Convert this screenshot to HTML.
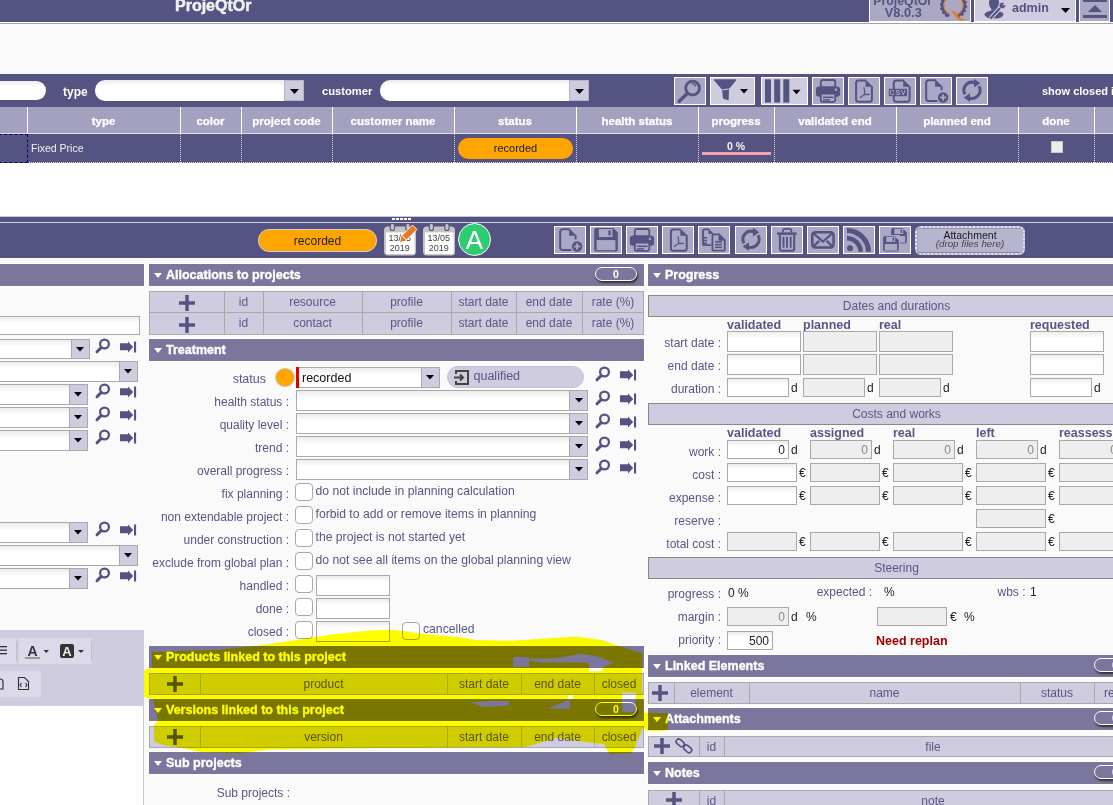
<!DOCTYPE html><html><head><meta charset="utf-8"><style>
html,body{margin:0;padding:0}
body{width:1113px;height:805px;overflow:hidden;position:relative;background:#fafafa;font-family:"Liberation Sans",sans-serif}
div{position:absolute;box-sizing:border-box}
.t{white-space:nowrap;line-height:1}
svg{position:absolute;overflow:visible}
</style></head><body>
<div style="left:0px;top:0px;width:1113px;height:22px;background:#545381"></div>
<div style="left:0px;top:22px;width:1113px;height:1px;background:#fff"></div>
<div style="left:0px;top:23px;width:1113px;height:1px;background:#a4a4a4"></div>
<div class="t" style="left:175px;top:-2px;font-size:16px;font-weight:700;color:#f0f0f0;;-webkit-text-stroke:0.5px #f0f0f0">ProjeQtOr</div>
<div style="left:869px;top:0px;width:102px;height:22px;background:#fff"></div>
<div style="left:870px;top:0px;width:100px;height:21px;background:#aba8c4"></div>
<div class="t" style="left:868px;width:69.5px;text-align:center;top:-5px;font-size:12.3px;font-weight:700;color:#545381;">ProjeQtOr</div>
<div class="t" style="left:868px;width:70.5px;text-align:center;top:7px;font-size:12.8px;font-weight:700;color:#545381;">V8.0.3</div>
<svg style="left:940px;top:0px" width="30" height="21" viewBox="0 0 30 21"><defs><clipPath id="lq"><rect x="0" y="0" width="30" height="21"/></clipPath></defs><g clip-path="url(#lq)"><circle cx="13.5" cy="5.5" r="11.2" fill="none" stroke="#545381" stroke-width="2.6"/><circle cx="25.75" cy="6.57" r="1.5" fill="#545381"/><circle cx="24.65" cy="10.70" r="1.5" fill="#545381"/><circle cx="22.20" cy="14.20" r="1.5" fill="#545381"/><circle cx="18.70" cy="16.65" r="1.5" fill="#545381"/><circle cx="14.57" cy="17.75" r="1.5" fill="#545381"/><circle cx="10.32" cy="17.38" r="1.5" fill="#545381"/><circle cx="6.45" cy="15.58" r="1.5" fill="#545381"/><circle cx="3.42" cy="12.55" r="1.5" fill="#545381"/><circle cx="1.62" cy="8.68" r="1.5" fill="#545381"/><circle cx="1.25" cy="4.43" r="1.5" fill="#545381"/><circle cx="2.35" cy="0.30" r="1.5" fill="#545381"/><circle cx="4.80" cy="-3.20" r="1.5" fill="#545381"/><circle cx="8.30" cy="-5.65" r="1.5" fill="#545381"/><circle cx="12.43" cy="-6.75" r="1.5" fill="#545381"/><circle cx="16.68" cy="-6.38" r="1.5" fill="#545381"/><circle cx="20.55" cy="-4.58" r="1.5" fill="#545381"/><circle cx="23.58" cy="-1.55" r="1.5" fill="#545381"/><circle cx="25.38" cy="2.32" r="1.5" fill="#545381"/><circle cx="13.5" cy="5.5" r="9.6" fill="none" stroke="#e87722" stroke-width="1.1"/><path d="M13.5 5.5 L7.5 20 L20 22Z" fill="#aba8c4"/><path d="M11 11 Q15 10.5 18 15 Q20.5 19.5 27 20 Q21 21.5 17.5 19 Q15 15 11 11Z" fill="#e87722"/></g></svg>
<div style="left:971px;top:0px;width:3px;height:22px;background:#545381"></div>
<div style="left:974px;top:0px;width:102px;height:22px;background:#fff"></div>
<div style="left:975px;top:0px;width:100px;height:21px;background:#cfcce0"></div>
<svg style="left:984px;top:0px" width="22" height="20" viewBox="0 0 22 20"><ellipse cx="10" cy="3" rx="5" ry="6.8" fill="#545381"/><path d="M7 8 Q10 11 13 8 L12.5 11 H7.5Z" fill="#545381"/><ellipse cx="10" cy="14.6" rx="9.5" ry="4" fill="#545381"/><path d="M6.5 18.5 L17.5 6.5" stroke="#cfcce0" stroke-width="4.2"/><path d="M6.5 18.5 L17.5 6.5" stroke="#545381" stroke-width="2"/><circle cx="18.3" cy="5.5" r="3.3" fill="#545381" stroke="#cfcce0" stroke-width="0.9"/><path d="M18.3 5.5 L21 2 L23 4.5Z" fill="#cfcce0"/></svg>
<div class="t" style="left:1012px;top:2px;font-size:12.5px;font-weight:700;color:#545381;">admin</div>
<svg style="left:1061px;top:8px" width="9" height="5" viewBox="0 0 9 5"><path d="M0 0H9L4.5 5Z" fill="#000"/></svg>
<div style="left:1076px;top:0px;width:3px;height:22px;background:#545381"></div>
<div style="left:1079px;top:0px;width:31px;height:22px;background:#fff"></div>
<div style="left:1080px;top:0px;width:29px;height:21px;background:#aba8c4"></div>
<div style="left:1083px;top:0px;width:24px;height:1.5px;background:#545381"></div>
<svg style="left:1088px;top:5px" width="14" height="8" viewBox="0 0 14 8"><path d="M0 7H14L7 0Z" fill="#545381"/></svg>
<div style="left:1083px;top:15px;width:24px;height:2.5px;background:#545381"></div>
<div style="left:1110px;top:0px;width:3px;height:22px;background:#545381"></div>
<div style="left:0px;top:74px;width:1113px;height:33px;background:#545381"></div>
<div style="left:-20px;top:81px;width:66px;height:19px;background:linear-gradient(#ececec,#fff 6px,#fff);border-radius:10px"></div>
<div class="t" style="left:63px;top:86px;font-size:12px;font-weight:700;color:#fff;">type</div>
<div style="left:95px;top:80px;width:209px;height:21px;background:linear-gradient(#ececec,#fff 6px,#fff);border-radius:10px 0 0 10px"></div>
<div style="left:284px;top:80px;width:20px;height:21px;background:#cfcce0;border:1px solid #b5b3c8"></div>
<svg style="left:289.5px;top:88.5px" width="9" height="5" viewBox="0 0 9 5"><path d="M0 0H9L4.5 5Z" fill="#000"/></svg>
<div class="t" style="left:322px;top:86px;font-size:11.2px;font-weight:700;color:#fff;">customer</div>
<div style="left:380px;top:80px;width:209px;height:21px;background:linear-gradient(#ececec,#fff 6px,#fff);border-radius:10px 0 0 10px"></div>
<div style="left:569px;top:80px;width:20px;height:21px;background:#cfcce0;border:1px solid #b5b3c8"></div>
<svg style="left:574.5px;top:88.5px" width="9" height="5" viewBox="0 0 9 5"><path d="M0 0H9L4.5 5Z" fill="#000"/></svg>
<div style="left:674px;top:77px;width:32px;height:28px;background:#aba8c6;border:1px solid #fff"></div>
<svg style="left:674px;top:77px" width="32" height="28" viewBox="0 0 32 28"><circle cx="18.6" cy="11.1" r="6.9" fill="none" stroke="#545381" stroke-width="2.8"/><path d="M17.5 6.3 A5 5 0 0 1 22 9.5" fill="none" stroke="#545381" stroke-width="1.3"/><line x1="13.5" y1="16.2" x2="5.2" y2="24.3" stroke="#545381" stroke-width="3.6" stroke-linecap="round"/></svg>
<div style="left:710px;top:77px;width:45px;height:28px;background:#cfcce0;border:1px solid #fff"></div>
<svg style="left:710px;top:77px" width="45" height="28" viewBox="0 0 45 28"><path d="M4 2.3 H26 Q26.6 2.5 26 3.5 L19 12 L18.6 23.5 L13 21.5 L12 12.5 L4 3.5 Q3.4 2.5 4 2.3Z" fill="#545381"/><path d="M12 13 L19 11.8" stroke="#cfcce0" stroke-width="1"/><path d="M30 12H38L34 16.5Z" fill="#000"/></svg>
<div style="left:761px;top:77px;width:47px;height:28px;background:#cfcce0;border:1px solid #fff"></div>
<svg style="left:761px;top:77px" width="47" height="28" viewBox="0 0 47 28"><rect x="4" y="2.3" width="6" height="23.3" fill="#545381"/><rect x="13.2" y="2.3" width="6" height="23.3" fill="#545381"/><rect x="22.3" y="2.3" width="6" height="23.3" fill="#545381"/><path d="M31.5 12.8H39.5L35.5 17.2Z" fill="#000"/></svg>
<div style="left:812px;top:77px;width:32px;height:28px;background:#aba8c6;border:1px solid #fff"></div>
<svg style="left:812px;top:77px" width="32" height="28" viewBox="0 0 32 28"><rect x="8.8" y="3" width="14.5" height="7.5" rx="2" fill="none" stroke="#545381" stroke-width="1.8"/><rect x="3.9" y="9.4" width="24.2" height="10.3" rx="3" fill="#545381"/><circle cx="23.9" cy="12.8" r="1.2" fill="#aba8c6"/><rect x="8.8" y="16.6" width="14.5" height="8.2" rx="1.5" fill="#aba8c6" stroke="#545381" stroke-width="1.8"/><rect x="11" y="19.6" width="10.5" height="1.4" fill="#545381"/><rect x="11" y="22.2" width="7" height="1.4" fill="#545381"/></svg>
<div style="left:848px;top:77px;width:32px;height:28px;background:#aba8c6;border:1px solid #fff"></div>
<svg style="left:848px;top:77px" width="32" height="28" viewBox="0 0 32 28"><path d="M18.0 3.4 H10.6 Q8.1 3.4 8.1 5.9 V22.2 Q8.1 24.7 10.6 24.7 H21.4 Q23.9 24.7 23.9 22.2 V9.3" fill="none" stroke="#545381" stroke-width="2"/><path d="M17.5 2.4 L24.9 9.8 H17.5Z" fill="#545381"/><path d="M15.9 10.4 Q17 14 16.5 17.5 L11.9 20.7 M16.5 17.5 L21.8 17.3" fill="none" stroke="#545381" stroke-width="1.3"/></svg>
<div style="left:884px;top:77px;width:32px;height:28px;background:#aba8c6;border:1px solid #fff"></div>
<svg style="left:884px;top:77px" width="32" height="28" viewBox="0 0 32 28"><path d="M19.700000000000003 3.4 H12.3 Q9.8 3.4 9.8 5.9 V22.2 Q9.8 24.7 12.3 24.7 H23.1 Q25.6 24.7 25.6 22.2 V9.3" fill="none" stroke="#545381" stroke-width="2"/><path d="M19.200000000000003 2.4 L26.6 9.8 H19.200000000000003Z" fill="#545381"/><rect x="4.8" y="11.8" width="18.2" height="7.4" fill="#545381"/><text x="13.9" y="18.2" font-size="7.2" font-weight="700" fill="#aba8c6" text-anchor="middle" font-family="Liberation Sans" letter-spacing="0.6">CSV</text></svg>
<div style="left:920px;top:77px;width:32px;height:28px;background:#aba8c6;border:1px solid #fff"></div>
<svg style="left:920px;top:77px" width="32" height="28" viewBox="0 0 32 28"><path d="M17.3 23.9 H8.7 Q6.2 23.9 6.2 21.4 V5.8 Q6.2 3.3 8.7 3.3 H15.6 M21.6 9.3 V13.3" fill="none" stroke="#545381" stroke-width="2"/><path d="M15.1 2.3 L22.6 9.8 H15.1Z" fill="#545381"/><circle cx="23.1" cy="20.5" r="5.2" fill="#545381"/><rect x="22.2" y="17.4" width="1.8" height="6.2" fill="#aba8c6"/><rect x="20" y="19.6" width="6.2" height="1.8" fill="#aba8c6"/></svg>
<div style="left:956px;top:77px;width:32px;height:28px;background:#aba8c6;border:1px solid #fff"></div>
<svg style="left:956px;top:77px" width="32" height="28" viewBox="0 0 32 28"><path d="M9 17.35 A8.1 8.1 0 0 1 19 5.8" fill="none" stroke="#545381" stroke-width="3"/><path d="M18 1.8 L24.3 6.2 L18 10.6Z" fill="#545381"/><path d="M23 9.25 A8.1 8.1 0 0 1 13 20.8" fill="none" stroke="#545381" stroke-width="3"/><path d="M14 16.2 L7.7 20.6 L14 25Z" fill="#545381"/></svg>
<div class="t" style="left:1042px;top:85.6px;font-size:11px;font-weight:700;color:#fff;">show closed i</div>
<div style="left:0px;top:107px;width:1113px;height:26px;background:#a3a0c0"></div>
<div style="left:0px;top:133px;width:1113px;height:1px;background:#e0dfe8"></div>
<div style="left:27px;top:107px;width:1px;height:26px;background:#fff"></div>
<div style="left:180px;top:107px;width:1px;height:26px;background:#fff"></div>
<div style="left:241px;top:107px;width:1px;height:26px;background:#fff"></div>
<div style="left:332px;top:107px;width:1px;height:26px;background:#fff"></div>
<div style="left:454px;top:107px;width:1px;height:26px;background:#fff"></div>
<div style="left:576px;top:107px;width:1px;height:26px;background:#fff"></div>
<div style="left:698px;top:107px;width:1px;height:26px;background:#fff"></div>
<div style="left:774px;top:107px;width:1px;height:26px;background:#fff"></div>
<div style="left:896px;top:107px;width:1px;height:26px;background:#fff"></div>
<div style="left:1018px;top:107px;width:1px;height:26px;background:#fff"></div>
<div style="left:1094px;top:107px;width:1px;height:26px;background:#fff"></div>
<div class="t" style="left:27px;width:153px;text-align:center;top:115.5px;font-size:11.5px;font-weight:700;color:#fff;;-webkit-text-stroke:0.25px #fff">type</div>
<div class="t" style="left:180px;width:61px;text-align:center;top:115.5px;font-size:11.5px;font-weight:700;color:#fff;;-webkit-text-stroke:0.25px #fff">color</div>
<div class="t" style="left:241px;width:91px;text-align:center;top:115.5px;font-size:11.5px;font-weight:700;color:#fff;;-webkit-text-stroke:0.25px #fff">project code</div>
<div class="t" style="left:332px;width:122px;text-align:center;top:115.5px;font-size:11.5px;font-weight:700;color:#fff;;-webkit-text-stroke:0.25px #fff">customer name</div>
<div class="t" style="left:454px;width:122px;text-align:center;top:115.5px;font-size:11.5px;font-weight:700;color:#fff;;-webkit-text-stroke:0.25px #fff">status</div>
<div class="t" style="left:576px;width:122px;text-align:center;top:115.5px;font-size:11.5px;font-weight:700;color:#fff;;-webkit-text-stroke:0.25px #fff">health status</div>
<div class="t" style="left:698px;width:76px;text-align:center;top:115.5px;font-size:11.5px;font-weight:700;color:#fff;;-webkit-text-stroke:0.25px #fff">progress</div>
<div class="t" style="left:774px;width:122px;text-align:center;top:115.5px;font-size:11.5px;font-weight:700;color:#fff;;-webkit-text-stroke:0.25px #fff">validated end</div>
<div class="t" style="left:896px;width:122px;text-align:center;top:115.5px;font-size:11.5px;font-weight:700;color:#fff;;-webkit-text-stroke:0.25px #fff">planned end</div>
<div class="t" style="left:1018px;width:76px;text-align:center;top:115.5px;font-size:11.5px;font-weight:700;color:#fff;;-webkit-text-stroke:0.25px #fff">done</div>
<div style="left:0px;top:134px;width:1113px;height:29px;background:#545381"></div>
<div style="left:0px;top:163px;width:1113px;height:53px;background:#fff"></div>
<div style="left:180px;top:134px;width:1px;height:29px;border-left:1px dotted #d8d8e0"></div>
<div style="left:241px;top:134px;width:1px;height:29px;border-left:1px dotted #d8d8e0"></div>
<div style="left:332px;top:134px;width:1px;height:29px;border-left:1px dotted #d8d8e0"></div>
<div style="left:454px;top:134px;width:1px;height:29px;border-left:1px dotted #d8d8e0"></div>
<div style="left:576px;top:134px;width:1px;height:29px;border-left:1px dotted #d8d8e0"></div>
<div style="left:698px;top:134px;width:1px;height:29px;border-left:1px dotted #d8d8e0"></div>
<div style="left:774px;top:134px;width:1px;height:29px;border-left:1px dotted #d8d8e0"></div>
<div style="left:896px;top:134px;width:1px;height:29px;border-left:1px dotted #d8d8e0"></div>
<div style="left:1018px;top:134px;width:1px;height:29px;border-left:1px dotted #d8d8e0"></div>
<div style="left:1094px;top:134px;width:1px;height:29px;border-left:1px dotted #d8d8e0"></div>
<div style="left:27px;top:162px;width:1113px;height:1px;border-top:1px dotted #e8e4c8"></div>
<div style="left:-1px;top:134px;width:29px;height:29px;border:1px dashed #00008b"></div>
<div class="t" style="left:31px;top:143px;font-size:10.5px;font-weight:400;color:#f2f2f2;">Fixed Price</div>
<div style="left:458px;top:137.5px;width:115px;height:21.5px;background:#ffa500;border-radius:11px"></div>
<div class="t" style="left:458px;width:115px;text-align:center;top:143px;font-size:11px;font-weight:400;color:#222;">recorded</div>
<div class="t" style="left:698px;width:76px;text-align:center;top:141px;font-size:10.5px;font-weight:700;color:#f4f4f4;">0 %</div>
<div style="left:702px;top:152px;width:69px;height:3px;background:#f4a3ab"></div>
<div style="left:1051px;top:141px;width:12px;height:12px;background:#ececec;border:1px solid #c8c8c8"></div>
<div style="left:0px;top:216px;width:1113px;height:1px;background:#c8c6d8"></div>
<div style="left:0px;top:217px;width:1113px;height:5px;background:#545381"></div>
<div style="left:392px;top:218px;width:3px;height:2px;background:#fff"></div>
<div style="left:396px;top:218px;width:3px;height:2px;background:#fff"></div>
<div style="left:400px;top:218px;width:3px;height:2px;background:#fff"></div>
<div style="left:404px;top:218px;width:3px;height:2px;background:#fff"></div>
<div style="left:408px;top:218px;width:3px;height:2px;background:#fff"></div>
<div style="left:0px;top:222px;width:1113px;height:1px;background:#d0cee0"></div>
<div style="left:0px;top:223px;width:1113px;height:35px;background:#545381"></div>
<div style="left:0px;top:258px;width:1113px;height:1px;background:#fff"></div>
<div style="left:257.5px;top:229px;width:119.5px;height:23px;background:#ffa500;border:1px solid #d8d0c8;border-radius:11px"></div>
<div class="t" style="left:258px;width:119px;text-align:center;top:235px;font-size:12px;font-weight:400;color:#222;">recorded</div>
<svg style="left:384px;top:223.5px" width="32" height="33" viewBox="0 0 32 33"><rect x="0" y="2.5" width="32" height="29" rx="4" fill="#c4c4c4"/><rect x="2" y="8.4" width="28.6" height="21.7" fill="#fff"/><rect x="6.3" y="-0.5" width="4.2" height="7" rx="2" fill="#c4c4c4" stroke="#545381" stroke-width="1.1"/><rect x="21.8" y="-0.5" width="4.2" height="7" rx="2" fill="#c4c4c4" stroke="#545381" stroke-width="1.1"/><text x="15.8" y="17.4" font-size="9" text-anchor="middle" fill="#444" font-family="Liberation Sans">13/05</text><text x="15.8" y="27.4" font-size="9" text-anchor="middle" fill="#444" font-family="Liberation Sans">2019</text><path d="M18 11.5 L28.5 1 L33 5.5 L22.5 16Z" fill="#e87722" stroke="#fff" stroke-width="0.9"/><path d="M17.6 11.9 L22.1 16.4 L16 18Z" fill="#e87722"/></svg>
<svg style="left:423px;top:223.5px" width="32" height="33" viewBox="0 0 32 33"><rect x="0" y="2.5" width="32" height="29" rx="4" fill="#c4c4c4"/><rect x="2" y="8.4" width="28.6" height="21.7" fill="#fff"/><rect x="6.3" y="-0.5" width="4.2" height="7" rx="2" fill="#c4c4c4" stroke="#545381" stroke-width="1.1"/><rect x="21.8" y="-0.5" width="4.2" height="7" rx="2" fill="#c4c4c4" stroke="#545381" stroke-width="1.1"/><text x="15.8" y="17.4" font-size="9" text-anchor="middle" fill="#444" font-family="Liberation Sans">13/05</text><text x="15.8" y="27.4" font-size="9" text-anchor="middle" fill="#444" font-family="Liberation Sans">2019</text></svg>
<svg style="left:457.5px;top:223px" width="33" height="33" viewBox="0 0 33 33"><circle cx="16.5" cy="16.5" r="16" fill="#2ecc71" stroke="#fff" stroke-width="1"/><text x="16.5" y="26" font-size="26" text-anchor="middle" fill="#fff" font-family="Liberation Sans">A</text></svg>
<div style="left:554px;top:226px;width:32px;height:28px;background:#aba8c6;border:1px solid #fff"></div>
<div style="left:590px;top:226px;width:32px;height:28px;background:#aba8c6;border:1px solid #fff"></div>
<div style="left:626px;top:226px;width:32px;height:28px;background:#aba8c6;border:1px solid #fff"></div>
<div style="left:662px;top:226px;width:32px;height:28px;background:#aba8c6;border:1px solid #fff"></div>
<div style="left:698px;top:226px;width:32px;height:28px;background:#aba8c6;border:1px solid #fff"></div>
<div style="left:735px;top:226px;width:32px;height:28px;background:#aba8c6;border:1px solid #fff"></div>
<div style="left:771px;top:226px;width:32px;height:28px;background:#aba8c6;border:1px solid #fff"></div>
<div style="left:807px;top:226px;width:32px;height:28px;background:#aba8c6;border:1px solid #fff"></div>
<div style="left:843px;top:226px;width:32px;height:28px;background:#aba8c6;border:1px solid #fff"></div>
<div style="left:879px;top:226px;width:32px;height:28px;background:#aba8c6;border:1px solid #fff"></div>
<svg style="left:554px;top:226px" width="32" height="28" viewBox="0 0 32 28"><path d="M17.3 23.9 H8.7 Q6.2 23.9 6.2 21.4 V5.8 Q6.2 3.3 8.7 3.3 H15.6 M21.6 9.3 V13.3" fill="none" stroke="#545381" stroke-width="2"/><path d="M15.1 2.3 L22.6 9.8 H15.1Z" fill="#545381"/><circle cx="23.1" cy="20.5" r="5.2" fill="#545381"/><rect x="22.2" y="17.4" width="1.8" height="6.2" fill="#aba8c6"/><rect x="20" y="19.6" width="6.2" height="1.8" fill="#aba8c6"/></svg>
<svg style="left:590px;top:226px" width="32" height="28" viewBox="0 0 32 28"><path d="M6.2 2.1 H23.3 L27.8 6.6 V23.6 Q27.8 25.6 25.8 25.6 H6.2 Q4.2 25.6 4.2 23.6 V4.1 Q4.2 2.1 6.2 2.1Z" fill="#545381"/><rect x="8.920000000000002" y="3.04" width="13.452" height="7.99" fill="#aba8c6"/><rect x="18.36" y="4.45" width="2.3600000000000003" height="4.935" fill="#545381"/><rect x="6.620000000000001" y="14.084999999999999" width="18.76" height="10.105" fill="#aba8c6"/></svg>
<svg style="left:626px;top:226px" width="32" height="28" viewBox="0 0 32 28"><rect x="8.8" y="3" width="14.5" height="7.5" rx="2" fill="none" stroke="#545381" stroke-width="1.8"/><rect x="3.9" y="9.4" width="24.2" height="10.3" rx="3" fill="#545381"/><circle cx="23.9" cy="12.8" r="1.2" fill="#aba8c6"/><rect x="8.8" y="16.6" width="14.5" height="8.2" rx="1.5" fill="#aba8c6" stroke="#545381" stroke-width="1.8"/><rect x="11" y="19.6" width="10.5" height="1.4" fill="#545381"/><rect x="11" y="22.2" width="7" height="1.4" fill="#545381"/></svg>
<svg style="left:662px;top:226px" width="32" height="28" viewBox="0 0 32 28"><path d="M18.8 3.4 H11.4 Q8.9 3.4 8.9 5.9 V22.2 Q8.9 24.7 11.4 24.7 H22.200000000000003 Q24.700000000000003 24.7 24.700000000000003 22.2 V9.3" fill="none" stroke="#545381" stroke-width="2"/><path d="M18.3 2.4 L25.700000000000003 9.8 H18.3Z" fill="#545381"/><path d="M15.9 10.4 Q17 14 16.5 17.5 L11.9 20.7 M16.5 17.5 L21.8 17.3" fill="none" stroke="#545381" stroke-width="1.3"/></svg>
<svg style="left:698px;top:226px" width="32" height="28" viewBox="0 0 32 28"><path d="M11 3.4 H6.8 Q5 3.4 5 5.2 V17.4 Q5 19.2 6.8 19.2 H13" fill="none" stroke="#545381" stroke-width="1.8"/><path d="M10.5 2.5 L16 8 H10.5Z" fill="#545381"/><path d="M16.2 8.4 H21 L26.8 14.2 V22.9 Q26.8 24.7 25 24.7 H16.2 Q14.4 24.7 14.4 22.9 V10.2 Q14.4 8.4 16.2 8.4Z" fill="#aba8c6" stroke="#545381" stroke-width="1.8"/><path d="M20.5 7.5 L27.7 14.7 H20.5Z" fill="#545381"/><rect x="17" y="15.2" width="7" height="1.5" fill="#545381"/><rect x="17" y="17.9" width="7" height="1.5" fill="#545381"/><rect x="17" y="20.6" width="7" height="1.5" fill="#545381"/><rect x="5" y="11" width="4" height="1.5" fill="#545381"/><rect x="5" y="13.8" width="4" height="1.5" fill="#545381"/><rect x="5" y="16.6" width="4" height="1.5" fill="#545381"/></svg>
<svg style="left:735px;top:226px" width="32" height="28" viewBox="0 0 32 28"><path d="M9 17.35 A8.1 8.1 0 0 1 19 5.8" fill="none" stroke="#545381" stroke-width="3"/><path d="M18 1.8 L24.3 6.2 L18 10.6Z" fill="#545381"/><path d="M23 9.25 A8.1 8.1 0 0 1 13 20.8" fill="none" stroke="#545381" stroke-width="3"/><path d="M14 16.2 L7.7 20.6 L14 25Z" fill="#545381"/></svg>
<svg style="left:771px;top:226px" width="32" height="28" viewBox="0 0 32 28"><rect x="6" y="6.4" width="19.7" height="2.5" fill="#545381"/><path d="M11.9 6.4 V4.6 Q11.9 2.9 13.6 2.9 H18.6 Q20.3 2.9 20.3 4.6 V6.4" fill="none" stroke="#545381" stroke-width="1.8"/><path d="M8.9 8.9 V23 Q8.9 24.7 10.6 24.7 H21.5 Q23.2 24.7 23.2 23 V8.9" fill="none" stroke="#545381" stroke-width="2"/><rect x="11.6" y="10.8" width="1.8" height="10.9" fill="#545381"/><rect x="15" y="10.8" width="1.8" height="10.9" fill="#545381"/><rect x="18.8" y="10.8" width="1.8" height="10.9" fill="#545381"/></svg>
<svg style="left:807px;top:226px" width="32" height="28" viewBox="0 0 32 28"><rect x="5.25" y="6.15" width="21.3" height="15.3" rx="3" fill="none" stroke="#545381" stroke-width="2.5"/><path d="M6 7 L15.9 15.5 L25.8 7 M6 20.6 L12.2 14.8 M25.8 20.6 L19.6 14.8" fill="none" stroke="#545381" stroke-width="2.3"/></svg>
<svg style="left:843px;top:226px" width="32" height="28" viewBox="0 0 32 28"><defs><clipPath id="rc"><rect x="0" y="0" width="32" height="25.8"/></clipPath></defs><g clip-path="url(#rc)"><circle cx="7" cy="22.3" r="3" fill="#545381"/><path d="M4 12.3 A13.7 13.7 0 0 1 17.7 26" fill="none" stroke="#545381" stroke-width="4.6"/><path d="M4 4.5 A21.5 21.5 0 0 1 25.5 26" fill="none" stroke="#545381" stroke-width="5"/></g></svg>
<svg style="left:879px;top:226px" width="32" height="28" viewBox="0 0 32 28"><path d="M14.2 2.1 H23.299999999999997 L27.799999999999997 6.6 V15.600000000000001 Q27.799999999999997 17.6 25.799999999999997 17.6 H14.2 Q12.2 17.6 12.2 15.600000000000001 V4.1 Q12.2 2.1 14.2 2.1Z" fill="#545381"/><rect x="15.32" y="2.72" width="8.892" height="5.2700000000000005" fill="#aba8c6"/><rect x="21.56" y="3.6500000000000004" width="1.56" height="3.255" fill="#545381"/><rect x="13.85" y="10.005" width="12.299999999999999" height="6.665" fill="#aba8c6"/><rect x="3" y="9" width="18" height="18" fill="#aba8c6"/><path d="M6.1 10 H15.299999999999997 L19.799999999999997 14.5 V23.6 Q19.799999999999997 25.6 17.799999999999997 25.6 H6.1 Q4.1 25.6 4.1 23.6 V12 Q4.1 10 6.1 10Z" fill="#545381"/><rect x="7.24" y="10.624" width="8.948999999999998" height="5.304" fill="#aba8c6"/><rect x="13.52" y="11.56" width="1.57" height="3.276" fill="#545381"/><rect x="5.75" y="17.956" width="12.399999999999999" height="6.708" fill="#aba8c6"/></svg>
<div style="left:915px;top:226px;width:110px;height:29px;background:#b7b4d0;border:2px dotted #e6e4ee;border-radius:6px"></div>
<div style="left:917px;top:228px;width:104px;height:25px;border-top:1px solid #9a98a8;border-left:1px solid #a8a6b8;border-bottom:1px solid #8a889a"></div>
<div class="t" style="left:915px;width:110px;text-align:center;top:229.8px;font-size:10.5px;font-weight:400;color:#1a1a1a;">Attachment</div>
<div class="t" style="left:915px;width:110px;text-align:center;top:238.7px;font-size:9.8px;font-weight:400;color:#444;;font-style:italic">(drop files here)</div>
<div style="left:-2px;top:264px;width:146px;height:22px;background:#7b769c;box-shadow:0 0 0 1px #fff"></div>
<div style="left:149px;top:264px;width:495px;height:22px;background:#7b769c;box-shadow:0 0 0 1px #fff"></div>
<svg style="left:154px;top:273px" width="8" height="5" viewBox="0 0 8 5"><path d="M0 0H8L4 5Z" fill="#fff"/></svg>
<div class="t" style="left:166px;top:269px;font-size:12.5px;font-weight:700;color:#fff;;-webkit-text-stroke:0.35px #fff">Allocations to projects</div>
<div style="left:595px;top:267px;width:42px;height:14px;background:#7b769c;border:1.5px solid #fff;border-radius:7px;box-shadow:1px 2px 2px #333"></div>
<div class="t" style="left:595px;width:42px;text-align:center;top:269px;font-size:10.5px;font-weight:700;color:#fff;">0</div>
<div style="left:149px;top:339px;width:495px;height:22px;background:#7b769c;box-shadow:0 0 0 1px #fff"></div>
<svg style="left:154px;top:348px" width="8" height="5" viewBox="0 0 8 5"><path d="M0 0H8L4 5Z" fill="#fff"/></svg>
<div class="t" style="left:166px;top:344px;font-size:12.5px;font-weight:700;color:#fff;;-webkit-text-stroke:0.35px #fff">Treatment</div>
<div style="left:149px;top:646px;width:495px;height:22px;background:#7b769c;box-shadow:0 0 0 1px #fff"></div>
<svg style="left:154px;top:655px" width="8" height="5" viewBox="0 0 8 5"><path d="M0 0H8L4 5Z" fill="#fff"/></svg>
<div class="t" style="left:166px;top:651px;font-size:12.5px;font-weight:700;color:#fff;;-webkit-text-stroke:0.35px #fff">Products linked to this project</div>
<div style="left:149px;top:699px;width:495px;height:22px;background:#7b769c;box-shadow:0 0 0 1px #fff"></div>
<svg style="left:154px;top:708px" width="8" height="5" viewBox="0 0 8 5"><path d="M0 0H8L4 5Z" fill="#fff"/></svg>
<div class="t" style="left:166px;top:704px;font-size:12.5px;font-weight:700;color:#fff;;-webkit-text-stroke:0.35px #fff">Versions linked to this project</div>
<div style="left:595px;top:702px;width:42px;height:14px;background:#7b769c;border:1.5px solid #fff;border-radius:7px;box-shadow:1px 2px 2px #333"></div>
<div class="t" style="left:595px;width:42px;text-align:center;top:704px;font-size:10.5px;font-weight:700;color:#fff;">0</div>
<div style="left:149px;top:752px;width:495px;height:22px;background:#7b769c;box-shadow:0 0 0 1px #fff"></div>
<svg style="left:154px;top:761px" width="8" height="5" viewBox="0 0 8 5"><path d="M0 0H8L4 5Z" fill="#fff"/></svg>
<div class="t" style="left:166px;top:757px;font-size:12.5px;font-weight:700;color:#fff;;-webkit-text-stroke:0.35px #fff">Sub projects</div>
<div style="left:648px;top:264px;width:465px;height:22px;background:#7b769c;box-shadow:0 0 0 1px #fff"></div>
<svg style="left:653px;top:273px" width="8" height="5" viewBox="0 0 8 5"><path d="M0 0H8L4 5Z" fill="#fff"/></svg>
<div class="t" style="left:665px;top:269px;font-size:12.5px;font-weight:700;color:#fff;;-webkit-text-stroke:0.35px #fff">Progress</div>
<div style="left:648px;top:655px;width:465px;height:22px;background:#7b769c;box-shadow:0 0 0 1px #fff"></div>
<svg style="left:653px;top:664px" width="8" height="5" viewBox="0 0 8 5"><path d="M0 0H8L4 5Z" fill="#fff"/></svg>
<div class="t" style="left:665px;top:660px;font-size:12.5px;font-weight:700;color:#fff;;-webkit-text-stroke:0.35px #fff">Linked Elements</div>
<div style="left:1094px;top:658px;width:42px;height:14px;background:#7b769c;border:1.5px solid #fff;border-radius:7px;box-shadow:1px 2px 2px #333"></div>
<div class="t" style="left:1094px;width:42px;text-align:center;top:660px;font-size:10.5px;font-weight:700;color:#fff;">0</div>
<div style="left:648px;top:708px;width:465px;height:22px;background:#7b769c;box-shadow:0 0 0 1px #fff"></div>
<svg style="left:653px;top:717px" width="8" height="5" viewBox="0 0 8 5"><path d="M0 0H8L4 5Z" fill="#fff"/></svg>
<div class="t" style="left:665px;top:713px;font-size:12.5px;font-weight:700;color:#fff;;-webkit-text-stroke:0.35px #fff">Attachments</div>
<div style="left:1094px;top:711px;width:42px;height:14px;background:#7b769c;border:1.5px solid #fff;border-radius:7px;box-shadow:1px 2px 2px #333"></div>
<div class="t" style="left:1094px;width:42px;text-align:center;top:713px;font-size:10.5px;font-weight:700;color:#fff;">0</div>
<div style="left:648px;top:762px;width:465px;height:22px;background:#7b769c;box-shadow:0 0 0 1px #fff"></div>
<svg style="left:653px;top:771px" width="8" height="5" viewBox="0 0 8 5"><path d="M0 0H8L4 5Z" fill="#fff"/></svg>
<div class="t" style="left:665px;top:767px;font-size:12.5px;font-weight:700;color:#fff;;-webkit-text-stroke:0.35px #fff">Notes</div>
<div style="left:1094px;top:765px;width:42px;height:14px;background:#7b769c;border:1.5px solid #fff;border-radius:7px;box-shadow:1px 2px 2px #333"></div>
<div class="t" style="left:1094px;width:42px;text-align:center;top:767px;font-size:10.5px;font-weight:700;color:#fff;">0</div>
<div style="left:149px;top:291px;width:495px;height:22px;background:#cfcce0;border:1px solid #a9a9a9"></div>
<div style="left:224px;top:291px;width:1px;height:22px;background:#a9a9a9"></div>
<div style="left:263px;top:291px;width:1px;height:22px;background:#a9a9a9"></div>
<div style="left:362px;top:291px;width:1px;height:22px;background:#a9a9a9"></div>
<div style="left:451px;top:291px;width:1px;height:22px;background:#a9a9a9"></div>
<div style="left:516px;top:291px;width:1px;height:22px;background:#a9a9a9"></div>
<div style="left:582px;top:291px;width:1px;height:22px;background:#a9a9a9"></div>
<div class="t" style="left:224px;width:39px;text-align:center;top:296px;font-size:12px;font-weight:400;color:#5b5585;">id</div>
<div class="t" style="left:263px;width:99px;text-align:center;top:296px;font-size:12px;font-weight:400;color:#5b5585;">resource</div>
<div class="t" style="left:362px;width:89px;text-align:center;top:296px;font-size:12px;font-weight:400;color:#5b5585;">profile</div>
<div class="t" style="left:451px;width:65px;text-align:center;top:296px;font-size:12px;font-weight:400;color:#5b5585;">start date</div>
<div class="t" style="left:516px;width:66px;text-align:center;top:296px;font-size:12px;font-weight:400;color:#5b5585;">end date</div>
<div class="t" style="left:582px;width:62px;text-align:center;top:296px;font-size:12px;font-weight:400;color:#5b5585;">rate (%)</div>
<div style="left:149px;top:312px;width:495px;height:23px;background:#cfcce0;border:1px solid #a9a9a9"></div>
<div style="left:224px;top:312px;width:1px;height:23px;background:#a9a9a9"></div>
<div style="left:263px;top:312px;width:1px;height:23px;background:#a9a9a9"></div>
<div style="left:362px;top:312px;width:1px;height:23px;background:#a9a9a9"></div>
<div style="left:451px;top:312px;width:1px;height:23px;background:#a9a9a9"></div>
<div style="left:516px;top:312px;width:1px;height:23px;background:#a9a9a9"></div>
<div style="left:582px;top:312px;width:1px;height:23px;background:#a9a9a9"></div>
<div class="t" style="left:224px;width:39px;text-align:center;top:317px;font-size:12px;font-weight:400;color:#5b5585;">id</div>
<div class="t" style="left:263px;width:99px;text-align:center;top:317px;font-size:12px;font-weight:400;color:#5b5585;">contact</div>
<div class="t" style="left:362px;width:89px;text-align:center;top:317px;font-size:12px;font-weight:400;color:#5b5585;">profile</div>
<div class="t" style="left:451px;width:65px;text-align:center;top:317px;font-size:12px;font-weight:400;color:#5b5585;">start date</div>
<div class="t" style="left:516px;width:66px;text-align:center;top:317px;font-size:12px;font-weight:400;color:#5b5585;">end date</div>
<div class="t" style="left:582px;width:62px;text-align:center;top:317px;font-size:12px;font-weight:400;color:#5b5585;">rate (%)</div>
<svg style="left:179px;top:294.5px" width="16" height="16" viewBox="0 0 16 16"><rect x="6.25" y="0" width="3.5" height="16" fill="#545381"/><rect x="0" y="6.25" width="16" height="3.5" fill="#545381"/></svg>
<svg style="left:179px;top:316.5px" width="16" height="16" viewBox="0 0 16 16"><rect x="6.25" y="0" width="3.5" height="16" fill="#545381"/><rect x="0" y="6.25" width="16" height="3.5" fill="#545381"/></svg>
<div class="t" style="right:847px;top:373px;font-size:12.5px;font-weight:400;color:#5b5585;">status</div>
<div style="left:275px;top:367.5px;width:19.5px;height:19.5px;background:#ffa500;border:1px solid #c8c8c8;border-radius:50%"></div>
<div style="left:296px;top:367px;width:143.5px;height:20.5px;background:linear-gradient(#ececec,#fff 7px,#fff);border:1px solid #a9a9a9"></div>
<div style="left:420.5px;top:367px;width:19px;height:20.5px;background:#cfcce0;border:1px solid #a9a9a9"></div>
<svg style="left:426.0px;top:375px" width="8" height="4.5" viewBox="0 0 8 4.5"><path d="M0 0H8L4.0 4.5Z" fill="#000"/></svg>
<div style="left:296px;top:367px;width:3px;height:20.5px;background:#e00000"></div>
<div class="t" style="left:302px;top:372px;font-size:12.5px;font-weight:400;color:#111;">recorded</div>
<div style="left:447px;top:366px;width:137px;height:22px;background:#cfcce0;border:1px solid #c4c2d4;border-radius:11px"></div>
<svg style="left:452.5px;top:369px" width="17" height="17" viewBox="0 0 17 17"><path d="M3 5 V2 H15 V15 H3 V12" fill="none" stroke="#444" stroke-width="2"/><path d="M1 8.5 H10 M7 5.5 L10 8.5 L7 11.5" fill="none" stroke="#444" stroke-width="2"/></svg>
<div class="t" style="left:473.5px;top:370px;font-size:12.5px;font-weight:400;color:#5b5585;">qualified</div>
<svg style="left:595px;top:366px" width="17" height="16" viewBox="0 0 17 16"><circle cx="9.5" cy="6" r="4.4" fill="none" stroke="#545381" stroke-width="2.3"/><line x1="6.2" y1="9.6" x2="2" y2="13.8" stroke="#545381" stroke-width="3" stroke-linecap="round"/></svg>
<svg style="left:620px;top:367px" width="17" height="16" viewBox="0 0 17 16"><path d="M0 4.2H8V2.5L13.2 8L8 13.6V11.2H0Z" fill="#545381"/><rect x="14" y="2.5" width="2.1" height="11" fill="#545381"/></svg>
<div class="t" style="right:824px;top:396px;font-size:12px;font-weight:400;color:#5b5585;">health status :</div>
<div style="left:296px;top:390px;width:292px;height:20.5px;background:linear-gradient(#ececec,#fff 7px,#fff);border:1px solid #a9a9a9"></div>
<div style="left:569px;top:390px;width:19px;height:20.5px;background:#cfcce0;border:1px solid #a9a9a9"></div>
<svg style="left:574.5px;top:398px" width="8" height="4.5" viewBox="0 0 8 4.5"><path d="M0 0H8L4.0 4.5Z" fill="#000"/></svg>
<svg style="left:595px;top:390px" width="17" height="16" viewBox="0 0 17 16"><circle cx="9.5" cy="6" r="4.4" fill="none" stroke="#545381" stroke-width="2.3"/><line x1="6.2" y1="9.6" x2="2" y2="13.8" stroke="#545381" stroke-width="3" stroke-linecap="round"/></svg>
<svg style="left:620px;top:391px" width="17" height="16" viewBox="0 0 17 16"><path d="M0 4.2H8V2.5L13.2 8L8 13.6V11.2H0Z" fill="#545381"/><rect x="14" y="2.5" width="2.1" height="11" fill="#545381"/></svg>
<div class="t" style="right:824px;top:419px;font-size:12px;font-weight:400;color:#5b5585;">quality level :</div>
<div style="left:296px;top:413px;width:292px;height:20.5px;background:linear-gradient(#ececec,#fff 7px,#fff);border:1px solid #a9a9a9"></div>
<div style="left:569px;top:413px;width:19px;height:20.5px;background:#cfcce0;border:1px solid #a9a9a9"></div>
<svg style="left:574.5px;top:421px" width="8" height="4.5" viewBox="0 0 8 4.5"><path d="M0 0H8L4.0 4.5Z" fill="#000"/></svg>
<svg style="left:595px;top:413px" width="17" height="16" viewBox="0 0 17 16"><circle cx="9.5" cy="6" r="4.4" fill="none" stroke="#545381" stroke-width="2.3"/><line x1="6.2" y1="9.6" x2="2" y2="13.8" stroke="#545381" stroke-width="3" stroke-linecap="round"/></svg>
<svg style="left:620px;top:414px" width="17" height="16" viewBox="0 0 17 16"><path d="M0 4.2H8V2.5L13.2 8L8 13.6V11.2H0Z" fill="#545381"/><rect x="14" y="2.5" width="2.1" height="11" fill="#545381"/></svg>
<div class="t" style="right:824px;top:442px;font-size:12px;font-weight:400;color:#5b5585;">trend :</div>
<div style="left:296px;top:436px;width:292px;height:20.5px;background:linear-gradient(#ececec,#fff 7px,#fff);border:1px solid #a9a9a9"></div>
<div style="left:569px;top:436px;width:19px;height:20.5px;background:#cfcce0;border:1px solid #a9a9a9"></div>
<svg style="left:574.5px;top:444px" width="8" height="4.5" viewBox="0 0 8 4.5"><path d="M0 0H8L4.0 4.5Z" fill="#000"/></svg>
<svg style="left:595px;top:436px" width="17" height="16" viewBox="0 0 17 16"><circle cx="9.5" cy="6" r="4.4" fill="none" stroke="#545381" stroke-width="2.3"/><line x1="6.2" y1="9.6" x2="2" y2="13.8" stroke="#545381" stroke-width="3" stroke-linecap="round"/></svg>
<svg style="left:620px;top:437px" width="17" height="16" viewBox="0 0 17 16"><path d="M0 4.2H8V2.5L13.2 8L8 13.6V11.2H0Z" fill="#545381"/><rect x="14" y="2.5" width="2.1" height="11" fill="#545381"/></svg>
<div class="t" style="right:824px;top:465px;font-size:12px;font-weight:400;color:#5b5585;">overall progress :</div>
<div style="left:296px;top:459px;width:292px;height:20.5px;background:linear-gradient(#ececec,#fff 7px,#fff);border:1px solid #a9a9a9"></div>
<div style="left:569px;top:459px;width:19px;height:20.5px;background:#cfcce0;border:1px solid #a9a9a9"></div>
<svg style="left:574.5px;top:467px" width="8" height="4.5" viewBox="0 0 8 4.5"><path d="M0 0H8L4.0 4.5Z" fill="#000"/></svg>
<svg style="left:595px;top:459px" width="17" height="16" viewBox="0 0 17 16"><circle cx="9.5" cy="6" r="4.4" fill="none" stroke="#545381" stroke-width="2.3"/><line x1="6.2" y1="9.6" x2="2" y2="13.8" stroke="#545381" stroke-width="3" stroke-linecap="round"/></svg>
<svg style="left:620px;top:460px" width="17" height="16" viewBox="0 0 17 16"><path d="M0 4.2H8V2.5L13.2 8L8 13.6V11.2H0Z" fill="#545381"/><rect x="14" y="2.5" width="2.1" height="11" fill="#545381"/></svg>
<div class="t" style="right:824px;top:488px;font-size:12px;font-weight:400;color:#5b5585;">fix planning :</div>
<div style="left:295px;top:483px;width:18px;height:18px;background:#fff;border:1px solid #a9a9a9;border-radius:4px"></div>
<div class="t" style="left:315.5px;top:485px;font-size:12.2px;font-weight:400;color:#5b5585;">do not include in planning calculation</div>
<div class="t" style="right:824px;top:511px;font-size:12px;font-weight:400;color:#5b5585;">non extendable project :</div>
<div style="left:295px;top:506px;width:18px;height:18px;background:#fff;border:1px solid #a9a9a9;border-radius:4px"></div>
<div class="t" style="left:315.5px;top:508px;font-size:12.2px;font-weight:400;color:#5b5585;">forbid to add or remove items in planning</div>
<div class="t" style="right:824px;top:534px;font-size:12px;font-weight:400;color:#5b5585;">under construction :</div>
<div style="left:295px;top:529px;width:18px;height:18px;background:#fff;border:1px solid #a9a9a9;border-radius:4px"></div>
<div class="t" style="left:315.5px;top:531px;font-size:12.2px;font-weight:400;color:#5b5585;">the project is not started yet</div>
<div class="t" style="right:824px;top:557px;font-size:12px;font-weight:400;color:#5b5585;">exclude from global plan :</div>
<div style="left:295px;top:552px;width:18px;height:18px;background:#fff;border:1px solid #a9a9a9;border-radius:4px"></div>
<div class="t" style="left:315.5px;top:554px;font-size:12.2px;font-weight:400;color:#5b5585;">do not see all items on the global planning view</div>
<div class="t" style="right:824px;top:580px;font-size:12px;font-weight:400;color:#5b5585;">handled :</div>
<div style="left:295px;top:575px;width:18px;height:18px;background:#fff;border:1px solid #a9a9a9;border-radius:4px"></div>
<div style="left:316px;top:566px;width:0px;height:0px;"></div>
<div class="t" style="right:824px;top:603px;font-size:12px;font-weight:400;color:#5b5585;">done :</div>
<div style="left:295px;top:598px;width:18px;height:18px;background:#fff;border:1px solid #a9a9a9;border-radius:4px"></div>
<div style="left:316px;top:589px;width:0px;height:0px;"></div>
<div class="t" style="right:824px;top:626px;font-size:12px;font-weight:400;color:#5b5585;">closed :</div>
<div style="left:295px;top:621px;width:18px;height:18px;background:#fff;border:1px solid #a9a9a9;border-radius:4px"></div>
<div style="left:316px;top:612px;width:0px;height:0px;"></div>
<div style="left:316px;top:574.5px;width:74px;height:21px;background:linear-gradient(#ececec,#fff 6px,#fff);border:1px solid #a9a9a9"></div>
<div style="left:316px;top:597.5px;width:74px;height:21px;background:linear-gradient(#ececec,#fff 6px,#fff);border:1px solid #a9a9a9"></div>
<div style="left:316px;top:620.5px;width:74px;height:21px;background:linear-gradient(#ececec,#fff 6px,#fff);border:1px solid #a9a9a9"></div>
<div style="left:402px;top:622px;width:18px;height:18px;background:#fff;border:1px solid #a9a9a9;border-radius:4px"></div>
<div class="t" style="left:423px;top:623px;font-size:12.2px;font-weight:400;color:#5b5585;">cancelled</div>
<div style="left:149px;top:673px;width:495px;height:21.5px;background:#cfcce0;border:1px solid #a9a9a9"></div>
<div style="left:200px;top:673px;width:1px;height:21.5px;background:#a9a9a9"></div>
<div style="left:447px;top:673px;width:1px;height:21.5px;background:#a9a9a9"></div>
<div style="left:521px;top:673px;width:1px;height:21.5px;background:#a9a9a9"></div>
<div style="left:594px;top:673px;width:1px;height:21.5px;background:#a9a9a9"></div>
<div class="t" style="left:200px;width:247px;text-align:center;top:678px;font-size:12px;font-weight:400;color:#5b5585;">product</div>
<div class="t" style="left:447px;width:74px;text-align:center;top:678px;font-size:12px;font-weight:400;color:#5b5585;">start date</div>
<div class="t" style="left:521px;width:73px;text-align:center;top:678px;font-size:12px;font-weight:400;color:#5b5585;">end date</div>
<div class="t" style="left:594px;width:50px;text-align:center;top:678px;font-size:12px;font-weight:400;color:#5b5585;">closed</div>
<svg style="left:167px;top:676px" width="16" height="16" viewBox="0 0 16 16"><rect x="6.25" y="0" width="3.5" height="16" fill="#545381"/><rect x="0" y="6.25" width="16" height="3.5" fill="#545381"/></svg>
<div style="left:149px;top:726px;width:495px;height:21.5px;background:#cfcce0;border:1px solid #a9a9a9"></div>
<div style="left:200px;top:726px;width:1px;height:21.5px;background:#a9a9a9"></div>
<div style="left:447px;top:726px;width:1px;height:21.5px;background:#a9a9a9"></div>
<div style="left:521px;top:726px;width:1px;height:21.5px;background:#a9a9a9"></div>
<div style="left:594px;top:726px;width:1px;height:21.5px;background:#a9a9a9"></div>
<div class="t" style="left:200px;width:247px;text-align:center;top:731px;font-size:12px;font-weight:400;color:#5b5585;">version</div>
<div class="t" style="left:447px;width:74px;text-align:center;top:731px;font-size:12px;font-weight:400;color:#5b5585;">start date</div>
<div class="t" style="left:521px;width:73px;text-align:center;top:731px;font-size:12px;font-weight:400;color:#5b5585;">end date</div>
<div class="t" style="left:594px;width:50px;text-align:center;top:731px;font-size:12px;font-weight:400;color:#5b5585;">closed</div>
<svg style="left:167px;top:729px" width="16" height="16" viewBox="0 0 16 16"><rect x="6.25" y="0" width="3.5" height="16" fill="#545381"/><rect x="0" y="6.25" width="16" height="3.5" fill="#545381"/></svg>
<div class="t" style="right:823px;top:787px;font-size:12px;font-weight:400;color:#5b5585;">Sub projects :</div>
<div style="left:-10px;top:316px;width:150px;height:19px;background:linear-gradient(#ededed,#fff 6px,#fff);border:1px solid #a9a9a9"></div>
<div style="left:-10px;top:338.5px;width:100px;height:20.5px;background:linear-gradient(#ececec,#fff 7px,#fff);border:1px solid #a9a9a9"></div>
<div style="left:70.5px;top:338.5px;width:19.5px;height:20.5px;background:#cfcce0;border:1px solid #a9a9a9"></div>
<svg style="left:76.0px;top:346.5px" width="8" height="4.5" viewBox="0 0 8 4.5"><path d="M0 0H8L4.0 4.5Z" fill="#000"/></svg>
<svg style="left:95px;top:337.5px" width="17" height="16" viewBox="0 0 17 16"><circle cx="9.5" cy="6" r="4.4" fill="none" stroke="#545381" stroke-width="2.3"/><line x1="6.2" y1="9.6" x2="2" y2="13.8" stroke="#545381" stroke-width="3" stroke-linecap="round"/></svg>
<svg style="left:120px;top:338.5px" width="17" height="16" viewBox="0 0 17 16"><path d="M0 4.2H8V2.5L13.2 8L8 13.6V11.2H0Z" fill="#545381"/><rect x="14" y="2.5" width="2.1" height="11" fill="#545381"/></svg>
<div style="left:-10px;top:361px;width:148px;height:20.5px;background:linear-gradient(#ececec,#fff 7px,#fff);border:1px solid #a9a9a9"></div>
<div style="left:118.5px;top:361px;width:19.5px;height:20.5px;background:#cfcce0;border:1px solid #a9a9a9"></div>
<svg style="left:124.0px;top:369px" width="8" height="4.5" viewBox="0 0 8 4.5"><path d="M0 0H8L4.0 4.5Z" fill="#000"/></svg>
<div style="left:-10px;top:384px;width:98px;height:20.5px;background:linear-gradient(#ececec,#fff 7px,#fff);border:1px solid #a9a9a9"></div>
<div style="left:68.5px;top:384px;width:19.5px;height:20.5px;background:#cfcce0;border:1px solid #a9a9a9"></div>
<svg style="left:74.0px;top:392px" width="8" height="4.5" viewBox="0 0 8 4.5"><path d="M0 0H8L4.0 4.5Z" fill="#000"/></svg>
<svg style="left:95px;top:383px" width="17" height="16" viewBox="0 0 17 16"><circle cx="9.5" cy="6" r="4.4" fill="none" stroke="#545381" stroke-width="2.3"/><line x1="6.2" y1="9.6" x2="2" y2="13.8" stroke="#545381" stroke-width="3" stroke-linecap="round"/></svg>
<svg style="left:120px;top:384px" width="17" height="16" viewBox="0 0 17 16"><path d="M0 4.2H8V2.5L13.2 8L8 13.6V11.2H0Z" fill="#545381"/><rect x="14" y="2.5" width="2.1" height="11" fill="#545381"/></svg>
<div style="left:-10px;top:407px;width:98px;height:20.5px;background:linear-gradient(#ececec,#fff 7px,#fff);border:1px solid #a9a9a9"></div>
<div style="left:68.5px;top:407px;width:19.5px;height:20.5px;background:#cfcce0;border:1px solid #a9a9a9"></div>
<svg style="left:74.0px;top:415px" width="8" height="4.5" viewBox="0 0 8 4.5"><path d="M0 0H8L4.0 4.5Z" fill="#000"/></svg>
<svg style="left:95px;top:406px" width="17" height="16" viewBox="0 0 17 16"><circle cx="9.5" cy="6" r="4.4" fill="none" stroke="#545381" stroke-width="2.3"/><line x1="6.2" y1="9.6" x2="2" y2="13.8" stroke="#545381" stroke-width="3" stroke-linecap="round"/></svg>
<svg style="left:120px;top:407px" width="17" height="16" viewBox="0 0 17 16"><path d="M0 4.2H8V2.5L13.2 8L8 13.6V11.2H0Z" fill="#545381"/><rect x="14" y="2.5" width="2.1" height="11" fill="#545381"/></svg>
<div style="left:-10px;top:430px;width:98px;height:20.5px;background:linear-gradient(#ececec,#fff 7px,#fff);border:1px solid #a9a9a9"></div>
<div style="left:68.5px;top:430px;width:19.5px;height:20.5px;background:#cfcce0;border:1px solid #a9a9a9"></div>
<svg style="left:74.0px;top:438px" width="8" height="4.5" viewBox="0 0 8 4.5"><path d="M0 0H8L4.0 4.5Z" fill="#000"/></svg>
<svg style="left:95px;top:429px" width="17" height="16" viewBox="0 0 17 16"><circle cx="9.5" cy="6" r="4.4" fill="none" stroke="#545381" stroke-width="2.3"/><line x1="6.2" y1="9.6" x2="2" y2="13.8" stroke="#545381" stroke-width="3" stroke-linecap="round"/></svg>
<svg style="left:120px;top:430px" width="17" height="16" viewBox="0 0 17 16"><path d="M0 4.2H8V2.5L13.2 8L8 13.6V11.2H0Z" fill="#545381"/><rect x="14" y="2.5" width="2.1" height="11" fill="#545381"/></svg>
<div style="left:-10px;top:522px;width:98px;height:20.5px;background:linear-gradient(#ececec,#fff 7px,#fff);border:1px solid #a9a9a9"></div>
<div style="left:68.5px;top:522px;width:19.5px;height:20.5px;background:#cfcce0;border:1px solid #a9a9a9"></div>
<svg style="left:74.0px;top:530px" width="8" height="4.5" viewBox="0 0 8 4.5"><path d="M0 0H8L4.0 4.5Z" fill="#000"/></svg>
<svg style="left:95px;top:521px" width="17" height="16" viewBox="0 0 17 16"><circle cx="9.5" cy="6" r="4.4" fill="none" stroke="#545381" stroke-width="2.3"/><line x1="6.2" y1="9.6" x2="2" y2="13.8" stroke="#545381" stroke-width="3" stroke-linecap="round"/></svg>
<svg style="left:120px;top:522px" width="17" height="16" viewBox="0 0 17 16"><path d="M0 4.2H8V2.5L13.2 8L8 13.6V11.2H0Z" fill="#545381"/><rect x="14" y="2.5" width="2.1" height="11" fill="#545381"/></svg>
<div style="left:-10px;top:545px;width:148px;height:20.5px;background:linear-gradient(#ececec,#fff 7px,#fff);border:1px solid #a9a9a9"></div>
<div style="left:118.5px;top:545px;width:19.5px;height:20.5px;background:#cfcce0;border:1px solid #a9a9a9"></div>
<svg style="left:124.0px;top:553px" width="8" height="4.5" viewBox="0 0 8 4.5"><path d="M0 0H8L4.0 4.5Z" fill="#000"/></svg>
<div style="left:-10px;top:568px;width:98px;height:20.5px;background:linear-gradient(#ececec,#fff 7px,#fff);border:1px solid #a9a9a9"></div>
<div style="left:68.5px;top:568px;width:19.5px;height:20.5px;background:#cfcce0;border:1px solid #a9a9a9"></div>
<svg style="left:74.0px;top:576px" width="8" height="4.5" viewBox="0 0 8 4.5"><path d="M0 0H8L4.0 4.5Z" fill="#000"/></svg>
<svg style="left:95px;top:567px" width="17" height="16" viewBox="0 0 17 16"><circle cx="9.5" cy="6" r="4.4" fill="none" stroke="#545381" stroke-width="2.3"/><line x1="6.2" y1="9.6" x2="2" y2="13.8" stroke="#545381" stroke-width="3" stroke-linecap="round"/></svg>
<svg style="left:120px;top:568px" width="17" height="16" viewBox="0 0 17 16"><path d="M0 4.2H8V2.5L13.2 8L8 13.6V11.2H0Z" fill="#545381"/><rect x="14" y="2.5" width="2.1" height="11" fill="#545381"/></svg>
<div style="left:0px;top:630px;width:144px;height:76px;background:#cfcce0"></div>
<div style="left:143px;top:706px;width:1px;height:99px;background:#c8c8c8"></div>
<div style="left:0px;top:706px;width:143px;height:99px;background:#fff"></div>
<div style="left:0px;top:638px;width:17px;height:26px;background:#dcdaea"></div>
<div style="left:19px;top:638px;width:73px;height:26px;background:#dcdaea"></div>
<div style="left:91px;top:641px;width:1px;height:20px;background:#c0c0c0"></div>
<div style="left:16px;top:641px;width:1px;height:20px;background:#c0c0c0"></div>
<svg style="left:0px;top:646px" width="8" height="10" viewBox="0 0 8 10"><rect x="0" y="0" width="7" height="1.3" fill="#333"/><rect x="0" y="3.5" width="7" height="1.3" fill="#333"/><rect x="0" y="7" width="7" height="1.3" fill="#333"/></svg>
<svg style="left:25px;top:644px" width="26" height="15" viewBox="0 0 26 15"><text x="7.5" y="11.5" font-size="14" font-weight="700" text-anchor="middle" fill="#333" font-family="Liberation Sans">A</text><rect x="0" y="13" width="15" height="2" fill="#999"/><path d="M18.5 6H24L21.25 9Z" fill="#333"/></svg>
<svg style="left:60px;top:644px" width="26" height="14" viewBox="0 0 26 14"><rect x="0" y="0" width="14" height="14" rx="2" fill="#333"/><text x="7" y="12" font-size="13" font-weight="700" text-anchor="middle" fill="#eee" font-family="Liberation Sans">A</text><path d="M18 6H24L21 9Z" fill="#333"/></svg>
<div style="left:0px;top:671px;width:41px;height:26px;background:#dcdaea"></div>
<svg style="left:0px;top:677px" width="4" height="13" viewBox="0 0 4 13"><path d="M0 2 Q3 2 3 5 V12 H0" fill="none" stroke="#333" stroke-width="1.2"/></svg>
<svg style="left:18px;top:677px" width="11" height="13" viewBox="0 0 11 13"><path d="M0.5 0.5 H6.5 L10.5 4.5 V12.5 H0.5Z" fill="none" stroke="#333" stroke-width="1.1"/><path d="M3.5 6 L2 8 L3.5 10 M7.5 6 L9 8 L7.5 10" fill="none" stroke="#333" stroke-width="1.1"/></svg>
<div style="left:648px;top:295px;width:470px;height:21.5px;background:#cfcce0;border:1px solid #888"></div>
<div class="t" style="left:648px;width:497px;text-align:center;top:300px;font-size:12px;font-weight:400;color:#5b5585;">Dates and durations</div>
<div class="t" style="left:727px;top:319px;font-size:12.5px;font-weight:700;color:#5b5585;">validated</div>
<div class="t" style="left:803px;top:319px;font-size:12.5px;font-weight:700;color:#5b5585;">planned</div>
<div class="t" style="left:879px;top:319px;font-size:12.5px;font-weight:700;color:#5b5585;">real</div>
<div class="t" style="left:1030px;top:319px;font-size:12.5px;font-weight:700;color:#5b5585;">requested</div>
<div class="t" style="right:392px;top:337px;font-size:12px;font-weight:400;color:#5b5585;">start date :</div>
<div class="t" style="right:392px;top:360px;font-size:12px;font-weight:400;color:#5b5585;">end date :</div>
<div class="t" style="right:392px;top:383px;font-size:12px;font-weight:400;color:#5b5585;">duration :</div>
<div style="left:727px;top:331px;width:74px;height:21px;background:linear-gradient(#ededed,#fff 6px,#fff);border:1px solid #a9a9a9"></div>
<div style="left:803px;top:331px;width:74px;height:21px;background:#eeeeee;border:1px solid #a9a9a9"></div>
<div style="left:879px;top:331px;width:74px;height:21px;background:#eeeeee;border:1px solid #a9a9a9"></div>
<div style="left:1030px;top:331px;width:74px;height:21px;background:linear-gradient(#ededed,#fff 6px,#fff);border:1px solid #a9a9a9"></div>
<div style="left:727px;top:354px;width:74px;height:21px;background:linear-gradient(#ededed,#fff 6px,#fff);border:1px solid #a9a9a9"></div>
<div style="left:803px;top:354px;width:74px;height:21px;background:#eeeeee;border:1px solid #a9a9a9"></div>
<div style="left:879px;top:354px;width:74px;height:21px;background:#eeeeee;border:1px solid #a9a9a9"></div>
<div style="left:1030px;top:354px;width:74px;height:21px;background:linear-gradient(#ededed,#fff 6px,#fff);border:1px solid #a9a9a9"></div>
<div style="left:727px;top:377.5px;width:62px;height:19.5px;background:linear-gradient(#ededed,#fff 6px,#fff);border:1px solid #a9a9a9"></div>
<div class="t" style="left:791px;top:381.5px;font-size:12px;font-weight:400;color:#222;">d</div>
<div style="left:803px;top:377.5px;width:62px;height:19.5px;background:#eeeeee;border:1px solid #a9a9a9"></div>
<div class="t" style="left:867px;top:381.5px;font-size:12px;font-weight:400;color:#222;">d</div>
<div style="left:879px;top:377.5px;width:62px;height:19.5px;background:#eeeeee;border:1px solid #a9a9a9"></div>
<div class="t" style="left:943px;top:381.5px;font-size:12px;font-weight:400;color:#222;">d</div>
<div style="left:1030px;top:377.5px;width:62px;height:19.5px;background:linear-gradient(#ededed,#fff 6px,#fff);border:1px solid #a9a9a9"></div>
<div class="t" style="left:1094px;top:381.5px;font-size:12px;font-weight:400;color:#222;">d</div>
<div style="left:648px;top:403px;width:470px;height:21.5px;background:#cfcce0;border:1px solid #888"></div>
<div class="t" style="left:648px;width:497px;text-align:center;top:408px;font-size:12px;font-weight:400;color:#5b5585;">Costs and works</div>
<div class="t" style="left:727px;top:426.5px;font-size:12.5px;font-weight:700;color:#5b5585;">validated</div>
<div class="t" style="left:810px;top:426.5px;font-size:12.5px;font-weight:700;color:#5b5585;">assigned</div>
<div class="t" style="left:893px;top:426.5px;font-size:12.5px;font-weight:700;color:#5b5585;">real</div>
<div class="t" style="left:976px;top:426.5px;font-size:12.5px;font-weight:700;color:#5b5585;">left</div>
<div class="t" style="left:1059px;top:426.5px;font-size:12.5px;font-weight:700;color:#5b5585;">reassessed</div>
<div class="t" style="right:392px;top:445.5px;font-size:12px;font-weight:400;color:#5b5585;">work :</div>
<div class="t" style="right:392px;top:468.5px;font-size:12px;font-weight:400;color:#5b5585;">cost :</div>
<div class="t" style="right:392px;top:491.5px;font-size:12px;font-weight:400;color:#5b5585;">expense :</div>
<div class="t" style="right:392px;top:514.5px;font-size:12px;font-weight:400;color:#5b5585;">reserve :</div>
<div class="t" style="right:392px;top:537.5px;font-size:12px;font-weight:400;color:#5b5585;">total cost :</div>
<div style="left:727px;top:440px;width:62px;height:19px;background:linear-gradient(#ededed,#fff 6px,#fff);border:1px solid #a9a9a9"></div>
<div class="t" style="right:328px;top:444px;font-size:12px;font-weight:400;color:#222;">0</div>
<div class="t" style="left:791px;top:444px;font-size:12px;font-weight:400;color:#222;">d</div>
<div style="left:727px;top:463px;width:70px;height:19px;background:linear-gradient(#ededed,#fff 6px,#fff);border:1px solid #a9a9a9"></div>
<div class="t" style="left:799px;top:467px;font-size:12px;font-weight:400;color:#222;">€</div>
<div style="left:727px;top:486px;width:70px;height:19px;background:linear-gradient(#ededed,#fff 6px,#fff);border:1px solid #a9a9a9"></div>
<div class="t" style="left:799px;top:490px;font-size:12px;font-weight:400;color:#222;">€</div>
<div style="left:727px;top:532px;width:70px;height:19px;background:#eeeeee;border:1px solid #a9a9a9"></div>
<div class="t" style="left:799px;top:536px;font-size:12px;font-weight:400;color:#222;">€</div>
<div style="left:810px;top:440px;width:62px;height:19px;background:#eeeeee;border:1px solid #a9a9a9"></div>
<div class="t" style="right:245px;top:444px;font-size:12px;font-weight:400;color:#888;">0</div>
<div class="t" style="left:874px;top:444px;font-size:12px;font-weight:400;color:#222;">d</div>
<div style="left:810px;top:463px;width:70px;height:19px;background:#eeeeee;border:1px solid #a9a9a9"></div>
<div class="t" style="left:882px;top:467px;font-size:12px;font-weight:400;color:#222;">€</div>
<div style="left:810px;top:486px;width:70px;height:19px;background:#eeeeee;border:1px solid #a9a9a9"></div>
<div class="t" style="left:882px;top:490px;font-size:12px;font-weight:400;color:#222;">€</div>
<div style="left:810px;top:532px;width:70px;height:19px;background:#eeeeee;border:1px solid #a9a9a9"></div>
<div class="t" style="left:882px;top:536px;font-size:12px;font-weight:400;color:#222;">€</div>
<div style="left:893px;top:440px;width:62px;height:19px;background:#eeeeee;border:1px solid #a9a9a9"></div>
<div class="t" style="right:162px;top:444px;font-size:12px;font-weight:400;color:#888;">0</div>
<div class="t" style="left:957px;top:444px;font-size:12px;font-weight:400;color:#222;">d</div>
<div style="left:893px;top:463px;width:70px;height:19px;background:#eeeeee;border:1px solid #a9a9a9"></div>
<div class="t" style="left:965px;top:467px;font-size:12px;font-weight:400;color:#222;">€</div>
<div style="left:893px;top:486px;width:70px;height:19px;background:#eeeeee;border:1px solid #a9a9a9"></div>
<div class="t" style="left:965px;top:490px;font-size:12px;font-weight:400;color:#222;">€</div>
<div style="left:893px;top:532px;width:70px;height:19px;background:#eeeeee;border:1px solid #a9a9a9"></div>
<div class="t" style="left:965px;top:536px;font-size:12px;font-weight:400;color:#222;">€</div>
<div style="left:976px;top:440px;width:62px;height:19px;background:#eeeeee;border:1px solid #a9a9a9"></div>
<div class="t" style="right:79px;top:444px;font-size:12px;font-weight:400;color:#888;">0</div>
<div class="t" style="left:1040px;top:444px;font-size:12px;font-weight:400;color:#222;">d</div>
<div style="left:976px;top:463px;width:70px;height:19px;background:#eeeeee;border:1px solid #a9a9a9"></div>
<div class="t" style="left:1048px;top:467px;font-size:12px;font-weight:400;color:#222;">€</div>
<div style="left:976px;top:486px;width:70px;height:19px;background:#eeeeee;border:1px solid #a9a9a9"></div>
<div class="t" style="left:1048px;top:490px;font-size:12px;font-weight:400;color:#222;">€</div>
<div style="left:976px;top:532px;width:70px;height:19px;background:#eeeeee;border:1px solid #a9a9a9"></div>
<div class="t" style="left:1048px;top:536px;font-size:12px;font-weight:400;color:#222;">€</div>
<div style="left:1059px;top:440px;width:62px;height:19px;background:#eeeeee;border:1px solid #a9a9a9"></div>
<div class="t" style="right:-4px;top:444px;font-size:12px;font-weight:400;color:#888;">0</div>
<div class="t" style="left:1123px;top:444px;font-size:12px;font-weight:400;color:#222;">d</div>
<div style="left:1059px;top:463px;width:70px;height:19px;background:#eeeeee;border:1px solid #a9a9a9"></div>
<div class="t" style="left:1131px;top:467px;font-size:12px;font-weight:400;color:#222;">€</div>
<div style="left:1059px;top:486px;width:70px;height:19px;background:#eeeeee;border:1px solid #a9a9a9"></div>
<div class="t" style="left:1131px;top:490px;font-size:12px;font-weight:400;color:#222;">€</div>
<div style="left:1059px;top:532px;width:70px;height:19px;background:#eeeeee;border:1px solid #a9a9a9"></div>
<div class="t" style="left:1131px;top:536px;font-size:12px;font-weight:400;color:#222;">€</div>
<div style="left:976px;top:509px;width:70px;height:19px;background:#eeeeee;border:1px solid #a9a9a9"></div>
<div class="t" style="left:1048px;top:513px;font-size:12px;font-weight:400;color:#222;">€</div>
<div style="left:648px;top:557px;width:470px;height:21.5px;background:#cfcce0;border:1px solid #888"></div>
<div class="t" style="left:648px;width:497px;text-align:center;top:562px;font-size:12px;font-weight:400;color:#5b5585;">Steering</div>
<div class="t" style="right:392px;top:588px;font-size:12px;font-weight:400;color:#5b5585;">progress :</div>
<div class="t" style="left:728px;top:587px;font-size:12px;font-weight:400;color:#222;">0 %</div>
<div class="t" style="right:241px;top:586px;font-size:12px;font-weight:400;color:#5b5585;">expected :</div>
<div class="t" style="left:884px;top:586px;font-size:12px;font-weight:400;color:#222;">%</div>
<div class="t" style="right:87.5px;top:586px;font-size:12px;font-weight:400;color:#5b5585;">wbs :</div>
<div class="t" style="left:1030px;top:586px;font-size:12px;font-weight:400;color:#222;">1</div>
<div class="t" style="right:392px;top:611px;font-size:12px;font-weight:400;color:#5b5585;">margin :</div>
<div style="left:727px;top:606.5px;width:62px;height:19px;background:#eeeeee;border:1px solid #a9a9a9"></div>
<div class="t" style="right:328px;top:610.5px;font-size:12px;font-weight:400;color:#888;">0</div>
<div class="t" style="left:791px;top:610.5px;font-size:12px;font-weight:400;color:#222;">d</div>
<div class="t" style="left:806px;top:611px;font-size:12px;font-weight:400;color:#222;">%</div>
<div style="left:877px;top:606.5px;width:70px;height:19px;background:#eeeeee;border:1px solid #a9a9a9"></div>
<div class="t" style="left:950px;top:611px;font-size:12px;font-weight:400;color:#222;">€</div>
<div class="t" style="left:964px;top:611px;font-size:12px;font-weight:400;color:#222;">%</div>
<div class="t" style="right:392px;top:634px;font-size:12px;font-weight:400;color:#5b5585;">priority :</div>
<div style="left:727px;top:630.5px;width:46px;height:19px;background:linear-gradient(#ededed,#fff 6px,#fff);border:1px solid #a9a9a9"></div>
<div class="t" style="right:344px;top:634.5px;font-size:12px;font-weight:400;color:#222;">500</div>
<div class="t" style="left:876px;top:634.5px;font-size:12.5px;font-weight:700;color:#a00000;">Need replan</div>
<div style="left:648px;top:682px;width:472px;height:21.5px;background:#cfcce0;border:1px solid #a9a9a9"></div>
<div style="left:674px;top:682px;width:1px;height:21.5px;background:#a9a9a9"></div>
<div style="left:749px;top:682px;width:1px;height:21.5px;background:#a9a9a9"></div>
<div style="left:1020px;top:682px;width:1px;height:21.5px;background:#a9a9a9"></div>
<div style="left:1094px;top:682px;width:1px;height:21.5px;background:#a9a9a9"></div>
<div class="t" style="left:674px;width:75px;text-align:center;top:687px;font-size:12px;font-weight:400;color:#5b5585;">element</div>
<div class="t" style="left:749px;width:271px;text-align:center;top:687px;font-size:12px;font-weight:400;color:#5b5585;">name</div>
<div class="t" style="left:1020px;width:74px;text-align:center;top:687px;font-size:12px;font-weight:400;color:#5b5585;">status</div>
<div class="t" style="left:1104px;top:687px;font-size:12px;font-weight:400;color:#5b5585;">re</div>
<svg style="left:652px;top:685px" width="16" height="16" viewBox="0 0 16 16"><rect x="6.25" y="0" width="3.5" height="16" fill="#545381"/><rect x="0" y="6.25" width="16" height="3.5" fill="#545381"/></svg>
<div style="left:648px;top:735.5px;width:472px;height:21px;background:#cfcce0;border:1px solid #a9a9a9"></div>
<div style="left:699px;top:735.5px;width:1px;height:21px;background:#a9a9a9"></div>
<div style="left:724px;top:735.5px;width:1px;height:21px;background:#a9a9a9"></div>
<div class="t" style="left:699px;width:25px;text-align:center;top:740.5px;font-size:12px;font-weight:400;color:#5b5585;">id</div>
<div class="t" style="left:724px;width:418px;text-align:center;top:740.5px;font-size:12px;font-weight:400;color:#5b5585;">file</div>
<svg style="left:654px;top:738px" width="16" height="16" viewBox="0 0 16 16"><rect x="6.25" y="0" width="3.5" height="16" fill="#545381"/><rect x="0" y="6.25" width="16" height="3.5" fill="#545381"/></svg>
<svg style="left:674px;top:737px" width="20" height="18" viewBox="0 0 20 18"><rect x="-4.5" y="-2.6" width="9" height="5.2" rx="2.6" transform="translate(6.2,5.8) rotate(40)" fill="none" stroke="#545381" stroke-width="1.6"/><rect x="-4.5" y="-2.6" width="9" height="5.2" rx="2.6" transform="translate(13.7,11.9) rotate(40)" fill="none" stroke="#545381" stroke-width="1.6"/></svg>
<div style="left:648px;top:789.5px;width:472px;height:30px;background:#cfcce0;border:1px solid #a9a9a9"></div>
<div style="left:699px;top:789.5px;width:1px;height:30px;background:#a9a9a9"></div>
<div style="left:724px;top:789.5px;width:1px;height:30px;background:#a9a9a9"></div>
<div class="t" style="left:699px;width:25px;text-align:center;top:794.5px;font-size:12px;font-weight:400;color:#5b5585;">id</div>
<div class="t" style="left:724px;width:418px;text-align:center;top:794.5px;font-size:12px;font-weight:400;color:#5b5585;">note</div>
<svg style="left:666px;top:792px" width="16" height="16" viewBox="0 0 16 16"><rect x="6.25" y="0" width="3.5" height="16" fill="#545381"/><rect x="0" y="6.25" width="16" height="3.5" fill="#545381"/></svg>
<svg style="left:0;top:0;mix-blend-mode:multiply" width="1113" height="805"><path d="M152 652 L190 650.5 L222 649.5 L260 645.4 L296 640 L332 634.6 L368 630.6 L390 629.7 L404 631 L422 633.7 L460 637.3 L476 640 L512 640.7 L548 638.2 L576 636.4 L602 640 L618.6 646 L641.5 653.1 L642.2 653.1 L642.2 668 L642 673 L642 690 L643.5 697 L643.5 712.5 L668 713.2 L668 729.6 L663 731 L647 731 L643 727 L640 735 L637.5 740 L636 745 L631 753.3 L620 753.5 L609.7 754.4 L604 744 L594 743 L556.5 738.1 L525 747 L470 747.5 L380 748 L270 749.6 L239 753 L200.7 752 L184.4 748.4 L163.4 745 L154 741.4 L154 725 L158 720.4 L152.9 699.3 L144 697 L144 670 L152 667.7Z M513.1 657.1 L529 657.1 L529 658.5 L541.8 658.5 L555 658.3 L565 656.7 L580 654.1 L590 655 L600 657 L613.2 663 L602.4 667.6 L589 667.6 L588 662.5 L541.8 662.5 L529 660.5 L529 666.8 L513.1 666.8Z M589 667.6 L602.4 667.6 L602.4 671.3 L589 671.3Z M470 702.8 L490 701 L508.7 701 L508.7 705.4 L482 707 L475 704Z M548 708.8 L569.3 699.4 L570.1 708.8Z M568.4 695 L572.7 695 L572.7 699.4 L568.4 699.4Z M622.2 692.6 L635.8 692.6 L635.8 712.2 L622.2 712.2Z" fill="#ffff00" fill-rule="evenodd"/></svg>
</body></html>
